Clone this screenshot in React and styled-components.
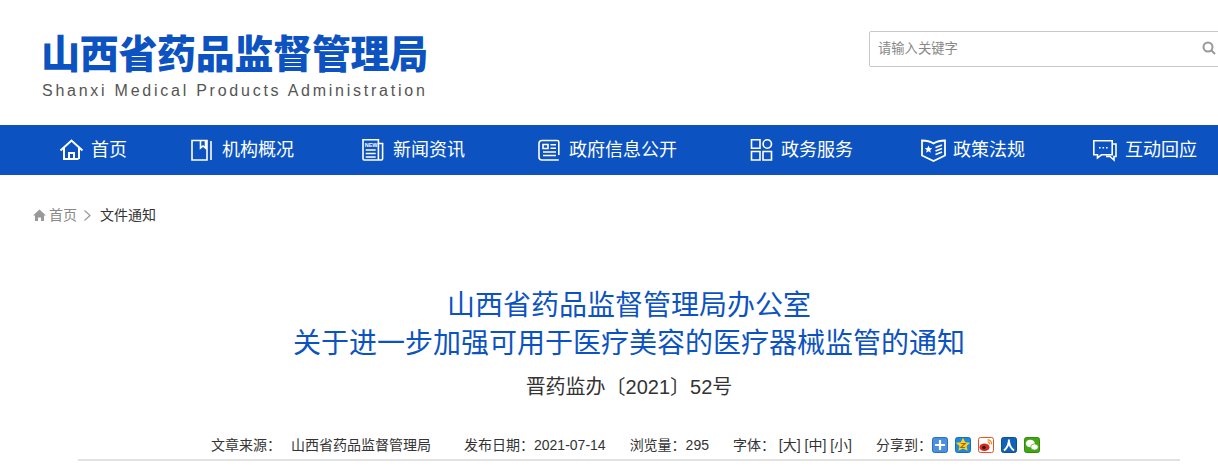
import styled, { createGlobalStyle } from 'styled-components';

const CJK = '"Noto Sans CJK SC", "Liberation Sans", sans-serif';

const GlobalStyle = createGlobalStyle`
  html, body {
    margin: 0;
    padding: 0;
    background: #fff;
    overflow: hidden;
  }
  body {
    font-family: "Liberation Sans", "Noto Sans CJK SC", sans-serif;
  }
`;

const Page = styled.div`
  width: 1218px;
  height: 469px;
  overflow: hidden;
`;

const Header = styled.header`
  height: 125px;
  box-sizing: border-box;
  padding: 31px 0 0 41px;
  display: flex;
  justify-content: space-between;
  align-items: flex-start;
`;

const Logo = styled.div`
  display: flex;
  flex-direction: column;
  margin-top: -2px;
`;

const LogoTitle = styled.div`
  font-family: ${CJK};
  font-size: 39px;
  font-weight: 900;
  line-height: 44px;
  letter-spacing: -0.3px;
  color: #0c53c1;
  white-space: nowrap;
`;

const LogoSub = styled.div`
  margin: 8px 0 0 1px;
  font-size: 16px;
  line-height: 20px;
  letter-spacing: 2.75px;
  color: #555;
  white-space: nowrap;
`;

const SearchBox = styled.div`
  flex: none;
  width: 360px;
  height: 36px;
  margin-right: -11px;
  box-sizing: border-box;
  border: 1px solid #c8c8c8;
  border-radius: 2px;
  display: flex;
  align-items: center;
  justify-content: space-between;
  padding: 0 12px 0 8px;
`;

const SearchHint = styled.span`
  font-size: 13.3px;
  line-height: 18px;
  margin-top: -1px;
  color: #888;
`;

const SearchIcon = styled.svg`
  width: 14px;
  height: 14px;
  margin-top: -2px;
  fill: none;
  stroke: #999;
  stroke-width: 2;
`;

const Nav = styled.nav`
  height: 50px;
  background: #0c53c1;
  display: flex;
  align-items: center;
  padding-left: 59px;
`;

const NavItem = styled.div`
  flex: none;
  width: ${({ $w }) => $w}px;
  display: flex;
  align-items: center;
  gap: 7px;
  color: #fff;
  font-size: 18px;
  white-space: nowrap;
`;

const NavLabel = styled.span`
  margin-top: -1px;
  line-height: 24px;
`;

const NavIcon = styled.svg`
  flex: none;
  width: 25px;
  height: 24px;
  fill: none;
  stroke: #fff;
  stroke-width: 1.6;
`;

const Crumbs = styled.div`
  height: 80px;
  box-sizing: border-box;
  padding: 31px 0 0 33px;
  display: flex;
  align-items: flex-start;
  font-size: 14px;
  line-height: 18px;
  color: #888;
`;

const CrumbHome = styled.svg`
  width: 13px;
  height: 18px;
  margin-right: 3px;
  fill: #999;
`;

const CrumbArrow = styled.svg`
  width: 9px;
  height: 18px;
  margin: 0 8px 0 6px;
  fill: none;
  stroke: #999;
  stroke-width: 1.2;
`;

const CrumbNow = styled.span`
  color: #333;
`;

const Article = styled.main`
  width: 1102px;
  margin-left: 78px;
`;

const Title = styled.h1`
  margin: 32px 0 0;
  font-size: 28px;
  font-weight: 400;
  line-height: 38px;
  text-align: center;
  color: #0c53c1;
`;

const DocNo = styled.div`
  margin-top: 10px;
  font-size: 20px;
  line-height: 28px;
  text-align: center;
  color: #333;
`;

const Meta = styled.div`
  margin-top: 35px;
  height: 25px;
  box-sizing: border-box;
  padding-left: 133px;
  border-bottom: 2px solid #e2e2e2;
  display: flex;
  align-items: flex-start;
  font-size: 14px;
  line-height: 18px;
  color: #333;
  white-space: nowrap;
`;

const MetaItem = styled.span`
  margin-right: ${({ $gap }) => $gap}px;
  white-space: pre;
`;

const ShareIcon = styled.svg`
  flex: none;
  width: 16px;
  height: 16px;
  margin: 1px 7px 0 0;
`;

const navItems = [
  {
    label: '首页',
    w: 131,
    icon: <path strokeWidth="2" d="M1.500 12.500 12.500 2.500 23.500 12.500M5 10v11h14.500M20 21v-11M10 21v-6h5v6" />,
  },
  {
    label: '机构概况',
    w: 171,
    icon: <path d="M2 2.500h15v19.500H2zM10.500 2.500v7.500l2.500-2 2.500 2V2.500M21 3v19" />,
  },
  {
    label: '新闻资讯',
    w: 176,
    icon: (
      <>
        <path d="M2 1.800h15.400V22H3.200A1.200 1.200 0 0 1 2 20.800zM17.400 5.500h4.200v15.300a1.200 1.200 0 0 1-1.200 1.200h-3M4.700 12h10M4.700 15.500h10M4.700 19h10" />
        <text x="3.700" y="9" fontSize="5.500" fontWeight="700" fill="#fff" stroke="none" fontFamily="Liberation Sans, sans-serif">NEW</text>
      </>
    ),
  },
  {
    label: '政府信息公开',
    w: 212,
    icon: <path d="M21.800 17V4a1.500 1.500 0 0 0-1.500-1.500H5A3 3 0 0 0 2 5.500V19a3 3 0 0 0 3 3h16.800M6 6.500h5v4H6zM13.500 6.800h5.500M13.500 10.200h5.500M6 14h13M6 17.500h13" />,
  },
  {
    label: '政务服务',
    w: 172,
    icon: <path d="M2.500 1.800h8.500v8.500H2.500zM2.500 13.500h8.500V22H2.500zM14 13.500h8.500V22H14zM22.500 6a4.200 4.200 0 1 1-8.400 0 4.200 4.200 0 0 1 8.400 0z" />,
  },
  {
    label: '政策法规',
    w: 172,
    icon: (
      <>
        <path strokeWidth="1.800" d="M1 2.500c4 0 8 .8 11.500 3C16 3.300 20 2.500 24 2.500V17.500l-11.500 5.500L1 17.500zM14.500 9.500l6.500-2.500M14.500 13l6.500-2.500M14.500 16.500l6.500-2.500" />
        <path fill="#fff" stroke="none" d="M7.500 7.500l1.100 2.500 2.700.2-2.100 1.800.7 2.700-2.400-1.500-2.400 1.500.7-2.700-2.100-1.800 2.700-.2z" />
      </>
    ),
  },
  {
    label: '互动回应',
    w: 125,
    icon: <path d="M.8 2.800h18.400v14H8.500l-4 3v-3H.8zM19.200 6H23v12.500h-2V22l-4-3.500h-4M6 9.800h1.600M9.500 9.800h1.600M13 9.800h1.600" />,
  },
];

function ShareGlyphs() {
  return (
    <>
      <ShareIcon viewBox="0 0 16 16">
        <rect x="0.500" y="0.500" width="15" height="15" rx="2" fill="#4a8fe0" stroke="#2f6fbe" />
        <path d="M8 3v10M3 8h10" stroke="#fff" strokeWidth="2.200" />
      </ShareIcon>
      <ShareIcon viewBox="0 0 16 16">
        <rect x="0.500" y="0.500" width="15" height="15" rx="2" fill="#1c8ae0" stroke="#1470b8" />
        <path d="M8 .8l2.200 4.400 5 .6-3.600 3.300 1 4.700L8 11.500l-4.600 2.300 1-4.700L.8 5.800l5-.6z" fill="#ffd21f" />
        <path d="M5.800 6.500h4.400L5.800 10.500h4.400" fill="none" stroke="#a86a10" strokeWidth="1.100" />
      </ShareIcon>
      <ShareIcon viewBox="0 0 16 16">
        <rect x="0.500" y="0.500" width="15" height="15" rx="2" fill="#fff" stroke="#e8501f" />
        <ellipse cx="6.500" cy="10.300" rx="5" ry="3.800" fill="#d9281e" />
        <circle cx="6" cy="10.500" r="1.800" fill="#222" />
        <path d="M9.500 2.800a3.800 3.800 0 0 1 4 4.500M9.500 5a1.800 1.800 0 0 1 2 2.300" fill="none" stroke="#f08a1d" strokeWidth="1.200" />
      </ShareIcon>
      <ShareIcon viewBox="0 0 16 16">
        <rect x="0.500" y="0.500" width="15" height="15" rx="2" fill="#0f62b5" stroke="#0c4f94" />
        <path d="M8 2.500c0 4.500-1.500 8-5 11M8 4.500c.5 4.500 2 7 5 9" fill="none" stroke="#fff" strokeWidth="2" />
      </ShareIcon>
      <ShareIcon viewBox="0 0 16 16">
        <rect x="0.500" y="0.500" width="15" height="15" rx="2" fill="#43a511" stroke="#37890d" />
        <ellipse cx="6.300" cy="6.500" rx="4.500" ry="3.800" fill="#fff" />
        <ellipse cx="10.500" cy="10" rx="3.800" ry="3.100" fill="#fff" stroke="#43a511" strokeWidth="0.700" />
      </ShareIcon>
    </>
  );
}

export default function App() {
  return (
    <Page>
      <GlobalStyle />
      <Header>
        <Logo>
          <LogoTitle>山西省药品监督管理局</LogoTitle>
          <LogoSub>Shanxi Medical Products Administration</LogoSub>
        </Logo>
        <SearchBox>
          <SearchHint>请输入关键字</SearchHint>
          <SearchIcon viewBox="0 0 14 14">
            <circle cx="6" cy="6" r="4.500" />
            <path d="M9.500 9.500 13 13" />
          </SearchIcon>
        </SearchBox>
      </Header>
      <Nav>
        {navItems.map((item) => (
          <NavItem key={item.label} $w={item.w}>
            <NavIcon viewBox="0 0 25 24">{item.icon}</NavIcon>
            <NavLabel>{item.label}</NavLabel>
          </NavItem>
        ))}
      </Nav>
      <Crumbs>
        <CrumbHome viewBox="0 0 13 18"><path d="M6.500 3.500 0 9.500h2V15h3v-3.500h3V15h3V9.500h2z" /></CrumbHome>
        首页
        <CrumbArrow viewBox="0 0 9 18"><path d="M1.500 4.500 7 9.500l-5.500 5" /></CrumbArrow>
        <CrumbNow>文件通知</CrumbNow>
      </Crumbs>
      <Article>
        <Title>山西省药品监督管理局办公室<br />关于进一步加强可用于医疗美容的医疗器械监管的通知</Title>
        <DocNo>晋药监办〔2021〕52号</DocNo>
        <Meta>
          <MetaItem $gap={10}>文章来源：</MetaItem>
          <MetaItem $gap={33}>山西省药品监督管理局</MetaItem>
          <MetaItem $gap={24}>发布日期：2021-07-14</MetaItem>
          <MetaItem $gap={24}>浏览量：295</MetaItem>
          <MetaItem $gap={24}>字体： [大] [中] [小]</MetaItem>
          <MetaItem $gap={0}>分享到：</MetaItem>
          <ShareGlyphs />
        </Meta>
      </Article>
    </Page>
  );
}
